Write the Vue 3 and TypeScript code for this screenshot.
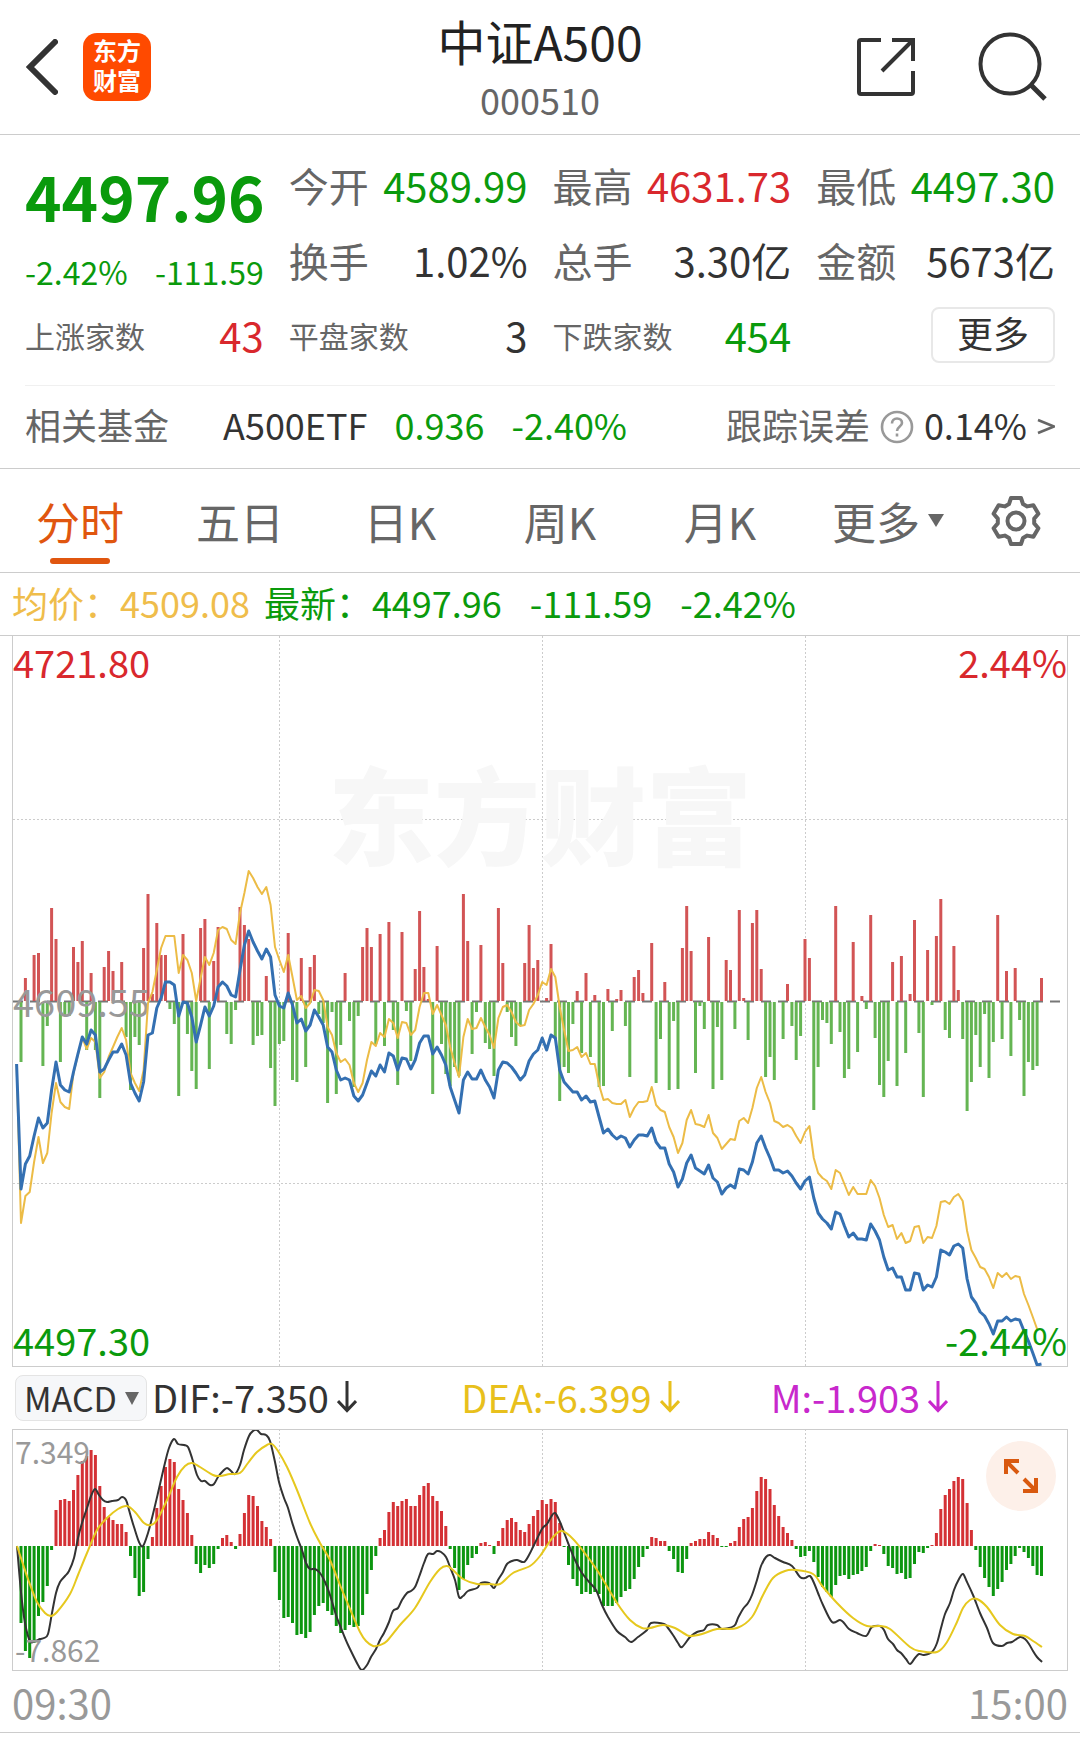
<script setup lang="ts">
import { ref } from 'vue'

type Tone = 'up' | 'down' | 'flat'
interface Quote { label: string; value: string; tone: Tone; small?: boolean }

const quotes: Quote[] = [
  { label: '今开', value: '4589.99', tone: 'down' },
  { label: '最高', value: '4631.73', tone: 'up' },
  { label: '最低', value: '4497.30', tone: 'down' },
  { label: '换手', value: '1.02%', tone: 'flat' },
  { label: '总手', value: '3.30亿', tone: 'flat' },
  { label: '金额', value: '5673亿', tone: 'flat' },
  { label: '上涨家数', value: '43', tone: 'up', small: true },
  { label: '平盘家数', value: '3', tone: 'flat', small: true },
  { label: '下跌家数', value: '454', tone: 'down', small: true },
]

const tabs = ['分时', '五日', '日K', '周K', '月K']
const activeTab = ref('分时')
const indicator = ref('MACD')

const indicators = [
  { text: 'DIF:-7.350', name: 'dif' },
  { text: 'DEA:-6.399', name: 'dea' },
  { text: 'M:-1.903', name: 'm' },
]

const STEP = 4.38
const ORIGIN = 3.6
const xAt = (i: number) => (ORIGIN + STEP * i).toFixed(1)

// One value per minute, in chart units above (+) or below (-) the zero line
const strength = [
  0, -60, 23, 0, 46, 48, -64, -24, 93, 62, -60, -14, -14, 54, 39, 60, -48, 28, -48, -96,
  34, 50, 30, 0, 39, -35, -88, -35, -43, 53, 107, 7, 78, 46, 46, -7, -22, -94, 67, -32,
  -69, -87, 73, 82, -67, 40, 74, 0, -32, -42, -8, 94, 76, 62, -43, -34, -33, 25, -66, -104,
  -42, -39, 68, -78, -80, 43, -65, 34, 46, -12, -21, -101, -10, -92, -43, 28, -19, -85, -14, 54,
  73, 54, -42, 67, -44, 79, -28, -83, 69, -9, -59, 32, 90, 34, 2, -92, 55, -42, -72, -84,
  -65, -74, 107, 60, -52, -10, 56, -41, -47, -74, 93, 38, -10, -35, -44, -24, 38, 76, 33, 41,
  0, 3, 57, -37, -99, -65, -71, -22, 10, -51, 28, -55, 6, -85, -84, 12, -29, 2, 11, -24,
  -75, 24, 31, 8, 0, 58, -81, -37, 19, -88, -19, -87, 53, 95, 50, -71, -4, -27, 64, -87,
  -25, -78, 41, 31, -27, 91, 3, -38, 78, 91, 32, -75, -55, -78, 0, -37, 17, -24, -58, -34,
  62, 43, -108, -65, -18, -21, -42, 95, -30, -76, -67, 59, -50, 5, -7, 86, -36, -83, -95, -59,
  39, -84, 45, -51, 7, 81, -31, -95, 51, -3, 65, 102, -28, -36, 55, 11, -37, -109, -80, -33,
  -65, -12, -76, -40, 86, -37, 30, -54, 33, -18, -94, -60, -68, -64, 23,
]

const price = [
  428, 553, 528, 520, 500, 482, 492, 487, 454, 426, 449, 454, 456, 436, 418, 401, 408, 394, 399, 436,
  433, 424, 416, 416, 408, 419, 447, 457, 465, 446, 399, 397, 372, 362, 346, 346, 349, 380, 366, 367,
  381, 406, 389, 371, 380, 370, 351, 346, 350, 359, 361, 334, 309, 295, 306, 315, 323, 313, 321, 359,
  370, 372, 357, 369, 387, 383, 395, 389, 374, 381, 389, 411, 416, 434, 444, 442, 444, 460, 465, 459,
  447, 435, 440, 429, 436, 417, 420, 434, 422, 423, 433, 424, 407, 400, 400, 418, 411, 419, 429, 451,
  464, 477, 444, 436, 443, 443, 434, 444, 451, 462, 434, 426, 427, 431, 437, 444, 439, 425, 418, 414,
  402, 414, 399, 402, 434, 446, 451, 456, 456, 464, 460, 466, 465, 481, 497, 493, 499, 503, 500, 502,
  511, 504, 499, 499, 500, 492, 506, 512, 512, 528, 536, 551, 543, 527, 519, 532, 535, 538, 529, 542,
  546, 558, 552, 549, 552, 533, 534, 538, 526, 507, 500, 512, 522, 534, 534, 537, 535, 540, 547, 553,
  545, 541, 562, 577, 583, 587, 593, 576, 578, 590, 601, 597, 603, 603, 604, 588, 595, 604, 621, 634,
  632, 641, 641, 654, 654, 637, 638, 654, 649, 651, 641, 614, 616, 619, 610, 608, 612, 643, 661, 667,
  676, 680, 688, 698, 685, 685, 681, 685, 683, 684, 695, 705, 717, 729, 728,
]

const average = [
  428, 587, 560, 556, 526, 501, 527, 517, 477, 447, 466, 471, 473, 437, 419, 402, 413, 402, 406, 442,
  436, 421, 411, 401, 392, 404, 437, 447, 455, 434, 367, 356, 334, 312, 300, 300, 300, 337, 319, 324,
  337, 365, 342, 321, 329, 317, 294, 291, 293, 304, 308, 277, 257, 235, 242, 251, 258, 251, 269, 311,
  324, 336, 319, 341, 364, 360, 372, 367, 354, 355, 364, 391, 399, 417, 426, 423, 429, 447, 456, 447,
  424, 406, 410, 397, 401, 383, 387, 402, 386, 387, 399, 394, 371, 357, 357, 378, 369, 379, 389, 411,
  427, 441, 401, 383, 393, 392, 382, 391, 399, 412, 382, 371, 369, 376, 386, 390, 389, 374, 368, 359,
  346, 349, 333, 341, 371, 394, 415, 414, 411, 421, 417, 428, 428, 449, 464, 463, 467, 468, 468, 464,
  481, 472, 466, 466, 465, 451, 469, 474, 476, 491, 501, 517, 507, 484, 474, 488, 489, 491, 479, 497,
  502, 513, 508, 503, 504, 485, 482, 487, 472, 452, 441, 456, 467, 485, 487, 491, 489, 492, 500, 507,
  496, 490, 522, 537, 542, 545, 553, 534, 537, 548, 559, 551, 558, 558, 558, 544, 550, 562, 579, 591,
  589, 603, 597, 607, 605, 591, 590, 607, 601, 602, 590, 566, 565, 568, 561, 558, 565, 595, 614, 622,
  631, 633, 641, 652, 637, 641, 637, 643, 640, 641, 658, 669, 681, 693,
]

const macd = [
  0, -77, -105, -112, -97, -70, -56, -40, -4, 36, 46, 47, 45, 56, 71, 85, 90, 96, 91, 60,
  39, 29, 26, 22, 22, 14, -10, -32, -50, -46, -13, 9, 38, 60, 79, 87, 84, 57, 46, 33,
  11, -18, -27, -19, -22, -18, -3, 8, 11, 4, -3, 12, 33, 51, 50, 40, 25, 19, 7, -26,
  -54, -72, -71, -77, -89, -88, -92, -86, -69, -60, -57, -65, -69, -80, -87, -84, -79, -81, -80, -69,
  -48, -24, -10, 8, 16, 34, 44, 40, 45, 47, 40, 40, 51, 60, 63, 50, 45, 35, 20, -3,
  -22, -44, -33, -19, -12, -8, 3, 4, 1, -8, 5, 18, 26, 28, 24, 16, 14, 22, 30, 36,
  46, 42, 47, 44, 23, -1, -19, -33, -40, -48, -46, -48, -46, -48, -60, -60, -60, -57, -51, -45,
  -43, -33, -21, -11, -3, 9, 8, 5, 5, -5, -13, -26, -27, -13, 3, 5, 7, 7, 14, 11,
  8, -1, -1, 3, 5, 19, 27, 29, 38, 55, 69, 67, 57, 41, 30, 19, 13, 6, -3, -11,
  -10, -5, -16, -31, -41, -46, -51, -39, -30, -29, -33, -29, -28, -25, -21, -5, 2, 1, -8, -20,
  -22, -28, -27, -33, -32, -18, -6, -7, -2, 1, 13, 37, 51, 57, 65, 69, 67, 43, 16, -4,
  -21, -32, -41, -50, -43, -36, -24, -18, -10, -2, -6, -12, -20, -29, -30,
]

// x,y pairs
const dif = '4,117 8,163 12,194 17,212 22,212 27,210 31,209 35,205 39,184 43,164 47,153 52,147 56,142 61,129 65,109 69,94 74,79 78,67 82,60 86,66 90,71 94,73 99,72 105,71 109,68 113,71 116,81 121,98 126,113 130,117 135,104 139,89 145,64 151,38 156,19 161,10 165,15 171,16 175,18 179,29 184,46 188,52 192,52 197,56 201,55 205,48 210,42 214,39 218,42 222,45 227,36 231,21 236,7 240,2 244,1 248,5 253,6 257,12 262,33 266,53 271,69 275,79 279,93 284,108 289,121 293,134 297,140 302,140 307,144 312,153 317,166 323,186 328,199 332,209 336,218 345,236 349,241 354,236 358,228 363,220 367,211 371,204 376,193 380,182 385,179 389,171 394,164 398,162 402,158 406,148 411,134 415,125 420,125 424,122 428,123 433,128 437,138 442,151 446,168 450,167 455,162 464,159 468,154 476,154 481,159 485,151 490,143 494,135 499,132 504,131 511,133 516,126 521,116 529,100 534,95 538,88 542,84 547,93 552,106 557,119 562,131 569,144 577,154 583,161 589,176 595,188 604,202 612,208 618,213 625,208 634,201 638,194 651,195 655,199 660,206 665,214 669,218 677,208 684,203 691,201 695,196 704,196 709,200 721,197 725,189 730,180 735,174 739,166 744,151 748,137 753,128 757,126 762,129 770,133 779,137 787,148 792,149 797,147 801,154 805,164 810,176 819,193 827,191 831,194 836,200 844,204 853,207 858,199 862,197 867,197 871,201 875,210 880,215 884,221 888,224 893,230 897,235 902,229 906,225 911,226 919,223 924,214 928,199 932,185 937,174 941,161 946,150 950,145 954,153 960,166 967,184 974,199 980,214 989,217 994,214 999,213 1007,208 1012,210 1016,215 1020,222 1024,228 1029,233'
const dea = '4,117 8,129 15,150 24,173 32,184 38,187 44,183 57,165 65,146 74,124 84,101 94,89 105,80 114,77 122,83 131,94 138,96 144,91 154,71 164,48 172,37 179,34 187,38 200,46 207,47 217,45 227,44 235,34 244,23 254,16 259,15 265,22 274,38 284,61 297,94 307,114 317,131 327,156 337,180 347,203 353,212 360,217 367,216 374,212 387,196 402,179 417,153 427,140 434,137 440,141 450,150 464,155 477,155 487,155 500,144 517,137 527,127 537,112 544,104 549,102 557,107 567,118 584,141 604,174 617,191 629,199 637,199 650,196 662,199 672,205 677,207 689,205 704,200 724,199 739,188 750,166 760,149 772,142 782,141 800,145 810,158 824,174 840,189 854,197 867,197 877,200 897,218 907,222 924,223 934,213 944,193 950,179 957,171 964,170 974,178 987,196 1000,205 1012,207 1020,212 1029,218'

function line(values: number[]): string {
  return values.map((y, i) => `${xAt(i)},${y}`).join(' ')
}

function bars(values: number[], zero: number, sign: 1 | -1): string {
  return values
    .map((v, i) => (v * sign > 0 ? `M${xAt(i)} ${zero}V${zero - v}` : ''))
    .join('')
}

// Catmull-Rom curve through the points
function curve(points: string): string {
  const p = points.split(' ').map((s) => s.split(',').map(Number))
  let d = `M${p[0][0]} ${p[0][1]}`
  for (let i = 0; i < p.length - 1; i++) {
    const a = p[Math.max(i - 1, 0)]
    const b = p[i]
    const c = p[i + 1]
    const e = p[Math.min(i + 2, p.length - 1)]
    const q = [b[0] + (c[0] - a[0]) / 6, b[1] + (c[1] - a[1]) / 6, c[0] - (e[0] - b[0]) / 6, c[1] - (e[1] - b[1]) / 6]
    d += `C${q.map((n) => n.toFixed(1)).join(' ')} ${c[0]} ${c[1]}`
  }
  return d
}

// Six-toothed cog outline around 0,0
function cog(): string {
  const tooth = [[-7, -17], [-5, -23], [5, -23], [7, -17]]
  const pts: string[] = []
  for (let k = 0; k < 6; k++) {
    const t = (k * Math.PI) / 3
    for (const [x, y] of tooth) {
      pts.push(`${(x * Math.cos(t) - y * Math.sin(t)).toFixed(1)},${(x * Math.sin(t) + y * Math.cos(t)).toFixed(1)}`)
    }
  }
  return pts.join(' ')
}

const columns = [266.5, 529.5, 792.5]
</script>

<template>
  <main class="page">
    <header class="top">
      <div class="side">
        <button class="icon-btn" aria-label="返回">
          <svg width="32" height="56" viewBox="0 0 32 56"><path d="M29 3 4 28 29 53" fill="none" stroke="#333" stroke-width="6" stroke-linecap="round" /></svg>
        </button>
        <a class="logo" href="#"><span>东方财富</span></a>
      </div>
      <div class="title">
        <h1>中证A500</h1>
        <p>000510</p>
      </div>
      <div class="side end">
        <button class="icon-btn" aria-label="分享">
          <svg width="60" height="60" viewBox="0 0 60 60" fill="none" stroke="#333" stroke-width="4"><path d="M25 3H5Q3 3 3 5V55Q3 57 5 57H55Q57 57 57 55V34M36 3H57V24M56 4 26 34" /></svg>
        </button>
        <button class="icon-btn" aria-label="搜索">
          <svg width="76" height="70" viewBox="0 0 76 70" fill="none" stroke="#333" stroke-width="4"><circle cx="32" cy="32" r="29.500" /><path d="M52 52 67 67" stroke-width="5" /></svg>
        </button>
      </div>
    </header>

    <section class="summary">
      <div class="quotes">
        <div class="main-quote">
          <strong>4497.96</strong>
          <div class="change"><span>-2.42%</span><span>-111.59</span></div>
        </div>
        <div v-for="q in quotes" :key="q.label" class="quote" :class="{ small: q.small }">
          <span class="label">{{ q.label }}</span>
          <span :class="q.tone">{{ q.value }}</span>
        </div>
        <button class="more">更多</button>
      </div>
      <div class="fund">
        <span class="label">相关基金</span>
        <a class="etf" href="#"><span>A500ETF</span><span class="down">0.936</span><span class="down">-2.40%</span></a>
        <a class="track" href="#">
          <span class="label">跟踪误差</span>
          <svg width="34" height="34" viewBox="0 0 34 34" fill="none" stroke="#999" stroke-width="2.6"><circle cx="17" cy="17" r="15" /><path d="M12 13.5C12 10.500 14 8.500 17 8.500S22 10.500 22 13C22 16.500 17 16.500 17 21M17 23.500V26.500" /></svg>
          <span>0.14%</span>
          <svg width="18" height="18" viewBox="0 0 18 18" fill="none" stroke="#666" stroke-width="2.600"><path d="M1 2 17 8.500 1 15" /></svg>
        </a>
      </div>
    </section>

    <nav class="tabs">
      <button v-for="t in tabs" :key="t" class="tab" :class="{ active: t === activeTab }" @click="activeTab = t">{{ t }}</button>
      <button class="tab menu" aria-haspopup="menu">更多<svg width="16" height="14" viewBox="0 0 16 14"><path d="M0 0H16L8 13Z" fill="#666" /></svg></button>
      <button class="icon-btn gear" aria-label="设置">
        <svg width="54" height="54" viewBox="-27 -27 54 54" fill="none" stroke="#666" stroke-width="4" stroke-linejoin="round"><polygon :points="cog()" /><circle r="8.500" /></svg>
      </button>
    </nav>

    <div class="info">
      <span class="avg">均价：4509.08</span>
      <span class="latest"><span>最新：4497.96</span><span>-111.59</span><span>-2.42%</span></span>
    </div>

    <section class="chart">
      <span class="watermark">东方财富</span>
      <svg viewBox="0 0 1054 730" fill="none">
        <g stroke="#ccc" stroke-dasharray="2 2">
          <path v-for="x in columns" :key="x" :d="`M${x} 0V730`" />
          <path d="M0 183.500H1054M0 547.500H1054" />
        </g>
        <path d="M0 365.500H1054" stroke="#777" stroke-width="2" stroke-dasharray="10 7" />
        <g stroke-width="3">
          <path :d="bars(strength, 365, 1)" stroke="#d25455" />
          <path :d="bars(strength, 366, -1)" stroke="#65b553" />
        </g>
      </svg>
      <span class="axis mid">4609.55</span>
      <svg class="lines" viewBox="0 0 1054 730" fill="none" stroke-linejoin="round">
        <polyline :points="line(average)" stroke="#ecbc46" stroke-width="2" />
        <polyline :points="line(price)" stroke="#3470b2" stroke-width="3" />
      </svg>
      <span class="axis top-left up">4721.80</span>
      <span class="axis top-right up">2.44%</span>
      <span class="axis bottom-left down">4497.30</span>
      <span class="axis bottom-right down">-2.44%</span>
    </section>

    <div class="indicator">
      <div class="picker">
        <select v-model="indicator" aria-label="指标"><option>MACD</option></select>
        <svg class="picker-caret" width="14" height="13" viewBox="0 0 14 13"><path d="M0 0H14L7 13Z" fill="#666" /></svg>
      </div>
      <div class="readings">
        <span v-for="r in indicators" :key="r.name" :class="r.name">{{ r.text }}<svg width="20" height="32" viewBox="0 0 20 32" fill="none" stroke="currentColor" stroke-width="3"><path d="M10 0V29M1 20 10 29.500 19 20" /></svg></span>
      </div>
    </div>

    <section class="chart sub">
      <span class="axis scale-top">7.349</span>
      <span class="axis scale-bottom">-7.862</span>
      <svg viewBox="0 1 1054 240" fill="none" stroke-linejoin="round">
        <path v-for="x in columns" :key="x" :d="`M${x} 0V241`" stroke="#ccc" stroke-dasharray="2 2" />
        <g stroke-width="3">
          <path :d="bars(macd, 117, 1)" stroke="#d43135" />
          <path :d="bars(macd, 117, -1)" stroke="#0c960f" />
        </g>
        <path :d="curve(dif)" stroke="#333" stroke-width="2" />
        <path :d="curve(dea)" stroke="#e6c81e" stroke-width="2" />
      </svg>
      <button class="expand" aria-label="全屏">
        <svg width="34" height="34" viewBox="0 0 34 34" fill="none" stroke="#d9590f" stroke-width="4"><path d="M15 2H2V15M2 2 14 14M19 32H32V19M32 32 20 20" /></svg>
      </button>
    </section>

    <div class="times"><time>09:30</time><time>15:00</time></div>
  </main>
</template>

<style>
body {
  margin: 0;
  background: #fff;
}
</style>

<style scoped>
.page {
  font-family: "Noto Sans CJK SC", "Noto Sans", sans-serif;
  color: #333;
  font-size: 36px;
  line-height: 40px;
}
button,
select {
  font: inherit;
  color: inherit;
  border: 0;
  padding: 0;
  background: none;
}
a {
  color: inherit;
  text-decoration: none;
}
h1,
p {
  margin: 0;
  font-weight: 400;
}
svg {
  display: block;
}
.up { color: #d9282d; }
.down { color: #0a9a0c; }
.label { color: #666; }

.top {
  display: grid;
  grid-template-columns: 1fr auto 1fr;
  align-items: center;
  height: 134px;
  padding: 0 26px;
  border-bottom: 1px solid #ccc;
}
.side {
  display: flex;
  align-items: center;
  gap: 25px;
}
.side.end {
  justify-content: flex-end;
  gap: 62px;
}
.logo {
  display: flex;
  justify-content: center;
  box-sizing: border-box;
  width: 68px;
  height: 68px;
  padding-top: 2px;
  border-radius: 14px;
  background: #ff4a00;
  color: #fff;
  font-size: 24px;
  font-weight: 700;
  line-height: 30px;
}
.logo span {
  width: 48px;
}
.title {
  text-align: center;
}
.title h1 {
  font-size: 48px;
  line-height: 64px;
  color: #222;
}
.title p {
  line-height: 54px;
  color: #666;
}

.summary {
  padding: 12px 25px 0;
  border-bottom: 1px solid #ccc;
}
.quotes {
  display: grid;
  grid-template-columns: repeat(4, minmax(0, 1fr));
  grid-auto-rows: 75px;
  column-gap: 25px;
  padding-bottom: 13px;
  border-bottom: 1px solid #f0f0f0;
}
.main-quote {
  grid-row: span 2;
  align-self: start;
  padding-top: 10px;
  color: #0a9a0c;
}
.main-quote strong {
  display: block;
  font-size: 62px;
  line-height: 76px;
}
.change {
  display: flex;
  justify-content: space-between;
  font-size: 32px;
  line-height: 76px;
}
.quote {
  display: flex;
  justify-content: space-between;
  align-items: center;
  font-size: 40px;
}
.quote.small .label {
  font-size: 30px;
}
.more {
  justify-self: end;
  align-self: center;
  width: 124px;
  height: 56px;
  padding-bottom: 6px;
  border: 2px solid #e8e8e8;
  border-radius: 8px;
}
.fund {
  display: flex;
  align-items: center;
  box-sizing: border-box;
  height: 82px;
  padding-bottom: 6px;
}
.etf {
  display: flex;
  gap: 27px;
  margin-left: 54px;
}
.track {
  display: flex;
  align-items: center;
  gap: 10px;
  margin-left: auto;
}
.track svg {
  margin-top: 6px;
}

.tabs {
  display: flex;
  height: 103px;
  padding-right: 24px;
  border-bottom: 1px solid #ccc;
}
.tab {
  flex: 20;
  display: flex;
  align-items: center;
  justify-content: center;
  gap: 8px;
  position: relative;
  font-size: 44px;
  color: #666;
}
.tab.menu {
  flex: 22;
}
.tab.active {
  color: #e0560f;
}
.tab.active::after {
  content: "";
  position: absolute;
  bottom: 8px;
  width: 60px;
  height: 6px;
  border-radius: 3px;
  background: #e0560f;
}
.gear {
  flex: 10;
  display: flex;
  align-items: center;
  justify-content: center;
}

.info {
  display: flex;
  align-items: center;
  gap: 14px;
  box-sizing: border-box;
  height: 63px;
  padding: 0 12px 4px;
  border-bottom: 1px solid #ccc;
}
.avg { color: #efbd4b; }
.latest {
  display: flex;
  gap: 28px;
  color: #0a9a0c;
}

.chart {
  position: relative;
  margin: 0 12px;
  border: 1px solid #ccc;
  border-top: 0;
}
.chart.sub {
  border-top: 1px solid #ccc;
}
.chart svg {
  width: 100%;
  height: auto;
}
.chart .lines {
  position: absolute;
  inset: 0;
}
.watermark {
  position: absolute;
  top: 24%;
  left: 50%;
  transform: translate(-50%, -50%);
  font-size: 106px;
  font-weight: 900;
  line-height: 106px;
  white-space: nowrap;
  color: #f7f7f7;
}
.axis {
  position: absolute;
  font-size: 38px;
}
.top-left { top: 6px; left: 0; }
.top-right { top: 6px; right: 0; }
.bottom-left { bottom: 6px; left: 0; }
.bottom-right { bottom: 6px; right: 0; }
.mid {
  top: 50%;
  left: 0;
  transform: translateY(-50%);
  color: #999;
}
.scale-top,
.scale-bottom {
  left: 2px;
  font-size: 30px;
  color: #999;
}
.scale-top { top: 1px; }
.scale-bottom { bottom: 1px; }

.indicator {
  display: flex;
  align-items: center;
  gap: 5px;
  height: 62px;
  padding-left: 15px;
}
.picker {
  position: relative;
}
.picker select {
  appearance: none;
  display: block;
  box-sizing: border-box;
  width: 132px;
  height: 46px;
  padding-left: 8px;
  border: 1px solid #e4e4e4;
  border-radius: 8px;
  background: #f6f7f9;
  font-size: 34px;
}
.picker-caret {
  position: absolute;
  top: 17px;
  right: 8px;
  pointer-events: none;
}
.chart + .indicator .picker-caret {
  width: 14px;
}
.readings {
  flex: 1;
  display: grid;
  grid-template-columns: repeat(3, 1fr);
  padding-bottom: 2px;
  font-size: 38px;
}
.readings span {
  display: flex;
  align-items: center;
  gap: 8px;
}
.dea { color: #e8c01c; }
.m { color: #c828cc; }
.expand {
  position: absolute;
  top: 11px;
  right: 11px;
  display: flex;
  align-items: center;
  justify-content: center;
  width: 70px;
  height: 70px;
  border-radius: 50%;
  background: #fdf0e9;
}
.chart .expand svg {
  width: 34px;
}
.times {
  display: flex;
  align-items: center;
  justify-content: space-between;
  height: 61px;
  padding: 0 12px;
  border-bottom: 1px solid #ccc;
  font-size: 40px;
  color: #999;
}
</style>
